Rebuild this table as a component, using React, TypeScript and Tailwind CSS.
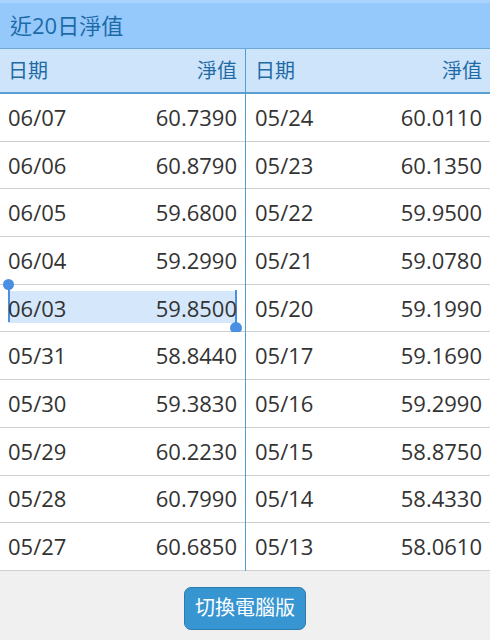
import React from "react";

const left: [string, string][] = [
  ["06/07", "60.7390"],
  ["06/06", "60.8790"],
  ["06/05", "59.6800"],
  ["06/04", "59.2990"],
  ["06/03", "59.8500"],
  ["05/31", "58.8440"],
  ["05/30", "59.3830"],
  ["05/29", "60.2230"],
  ["05/28", "60.7990"],
  ["05/27", "60.6850"],
];

const right: [string, string][] = [
  ["05/24", "60.0110"],
  ["05/23", "60.1350"],
  ["05/22", "59.9500"],
  ["05/21", "59.0780"],
  ["05/20", "59.1990"],
  ["05/17", "59.1690"],
  ["05/16", "59.2990"],
  ["05/15", "58.8750"],
  ["05/14", "58.4330"],
  ["05/13", "58.0610"],
];

function Column({ rows, side }: { rows: [string, string][]; side: "left" | "right" }) {
  const pad = side === "left" ? "pl-[8px] pr-[8px]" : "pl-[9px] pr-[8px]";
  return (
    <div className="flex flex-col">
      <div
        className={`flex h-[43px] items-center justify-between bg-[#cde4fa] text-[20px] text-[#1f6aa5] ${pad}`}
      >
        <span>日期</span>
        <span>淨值</span>
      </div>
      <div className="h-[2px] bg-[#5b9fd0]" />
      {rows.map(([d, v]) => (
        <div
          key={d}
          className={`relative flex h-[47.7px] items-center justify-between border-b border-[#cfcfcf] bg-white text-[22px] text-[#333] ${pad}`}
        >
          {d === "06/03" && (
            <>
              <div className="absolute left-[8px] right-[9px] top-[6px] h-[32px] bg-[#d5e7fb]" />
              <div className="absolute left-[8px] top-[0px] h-[37px] w-[2px] bg-[#4a8fe2]" />
              <div className="absolute left-[3px] top-[-6px] h-[11px] w-[11px] rounded-full bg-[#4a8fe2]" />
              <div className="absolute right-[8px] top-[5px] h-[36px] w-[2px] bg-[#4a8fe2]" />
              <div className="absolute right-[3px] top-[37px] h-[12px] w-[12px] rounded-full bg-[#4a8fe2]" />
            </>
          )}
          <span className="relative">{d}</span>
          <span className="relative">{v}</span>
        </div>
      ))}
    </div>
  );
}

export default function App() {
  return (
    <div
      className="flex h-[640px] w-[490px] flex-col overflow-hidden bg-[#f0f0f0]"
      style={{ fontFamily: '"Open Sans", "Noto Sans CJK TC", sans-serif' }}
    >
      <div className="h-[3px] bg-[#a9d3fc]" />
      <div className="flex h-[45px] items-center bg-[#96c9fb] px-[10px] text-[22px] text-[#1d6aa8]">
        近20日淨值
      </div>
      <div className="h-[1px] bg-[#6aa9d8]" />
      <div className="grid grid-cols-[245px_1px_244px]">
        <Column rows={left} side="left" />
        <div className="bg-[#4f9fd0]" />
        <Column rows={right} side="right" />
      </div>
      <div className="flex justify-center pt-[16px]">
        <button className="h-[43px] rounded-[7px] border border-[#2c7cb0] bg-[#3796d2] px-[10px] text-[20px] text-white">
          切換電腦版
        </button>
      </div>
    </div>
  );
}
